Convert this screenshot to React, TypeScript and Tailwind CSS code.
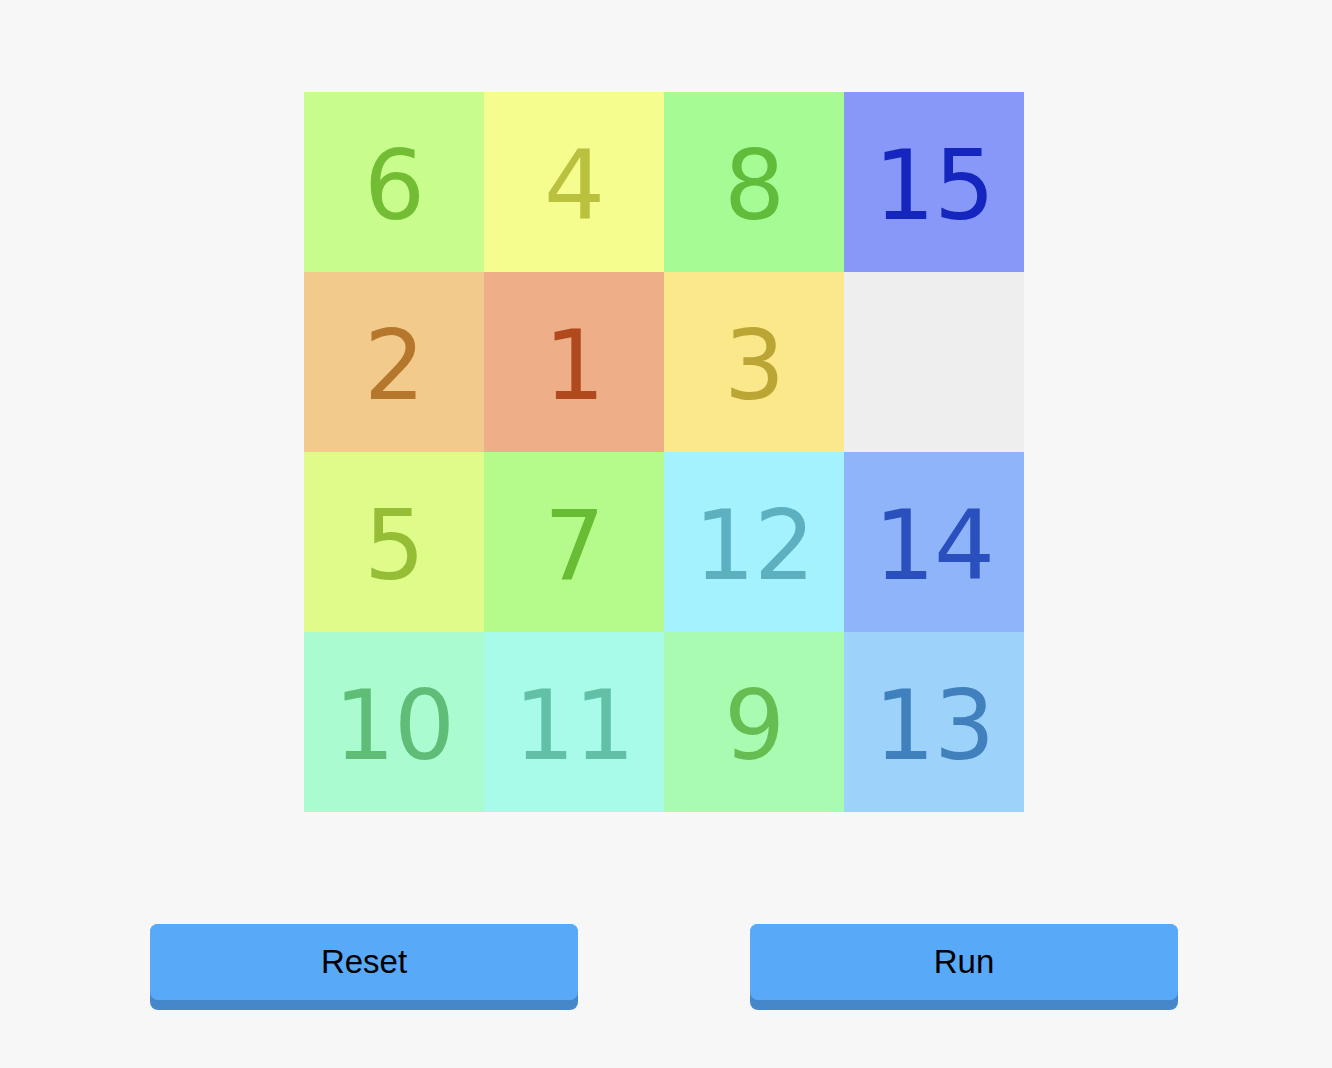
import React from "react";

type Tile = { n?: number; bg: string; fg: string };

const tiles: Tile[] = [
    { n: 6, bg: "bg-[#c8fc8c]", fg: "text-[#73bd35]" },
    { n: 4, bg: "bg-[#f5fd8e]", fg: "text-[#b9c13e]" },
    { n: 8, bg: "bg-[#a6fb94]", fg: "text-[#62bc3c]" },
    { n: 15, bg: "bg-[#8898f8]", fg: "text-[#1526be]" },
    { n: 2, bg: "bg-[#f2ca8b]", fg: "text-[#b5772b]" },
    { n: 1, bg: "bg-[#eeae87]", fg: "text-[#b0491c]" },
    { n: 3, bg: "bg-[#fae88b]", fg: "text-[#bba534]" },
    { bg: "bg-[#eeeeee]", fg: "" },
    { n: 5, bg: "bg-[#dffc8b]", fg: "text-[#95bd36]" },
    { n: 7, bg: "bg-[#b5fb8b]", fg: "text-[#69bd34]" },
    { n: 12, bg: "bg-[#a3f2fe]", fg: "text-[#5db0c0]" },
    { n: 14, bg: "bg-[#8fb4f9]", fg: "text-[#2a50be]" },
    { n: 10, bg: "bg-[#aafbcf]", fg: "text-[#5fbd78]" },
    { n: 11, bg: "bg-[#a9fbe9]", fg: "text-[#61c0a6]" },
    { n: 9, bg: "bg-[#a8fbb0]", fg: "text-[#68bd52]" },
    { n: 13, bg: "bg-[#9dd2fa]", fg: "text-[#3f80bd]" },
];

const Button = ({ label }: { label: string }) => (
    <button className="w-[428px] h-[86px] rounded-lg bg-[#4587c8] pb-[10px] cursor-pointer">
        <div className="h-full rounded-lg bg-[#58a9f7] flex items-center justify-center text-black text-[33px] font-['Liberation_Sans',sans-serif]">
            {label}
        </div>
    </button>
);

export default function App() {
    return (
        <div className="w-full min-h-[1068px] bg-[#f7f7f7]">
            <div className="w-[1328px] flex flex-col items-center pt-[92px]">
                <div className="grid grid-cols-4 w-[720px]">
                    {tiles.map((t, i) => (
                        <div
                            key={i}
                            className={`h-[180px] pt-[8px] flex items-center justify-center ${t.bg} ${t.fg} text-[96px] leading-none tracking-[-1px] font-['DejaVu_Sans',sans-serif]`}
                        >
                            {t.n}
                        </div>
                    ))}
                </div>
                <div className="mt-[112px] flex gap-[172px]">
                    <Button label="Reset" />
                    <Button label="Run" />
                </div>
            </div>
        </div>
    );
}
